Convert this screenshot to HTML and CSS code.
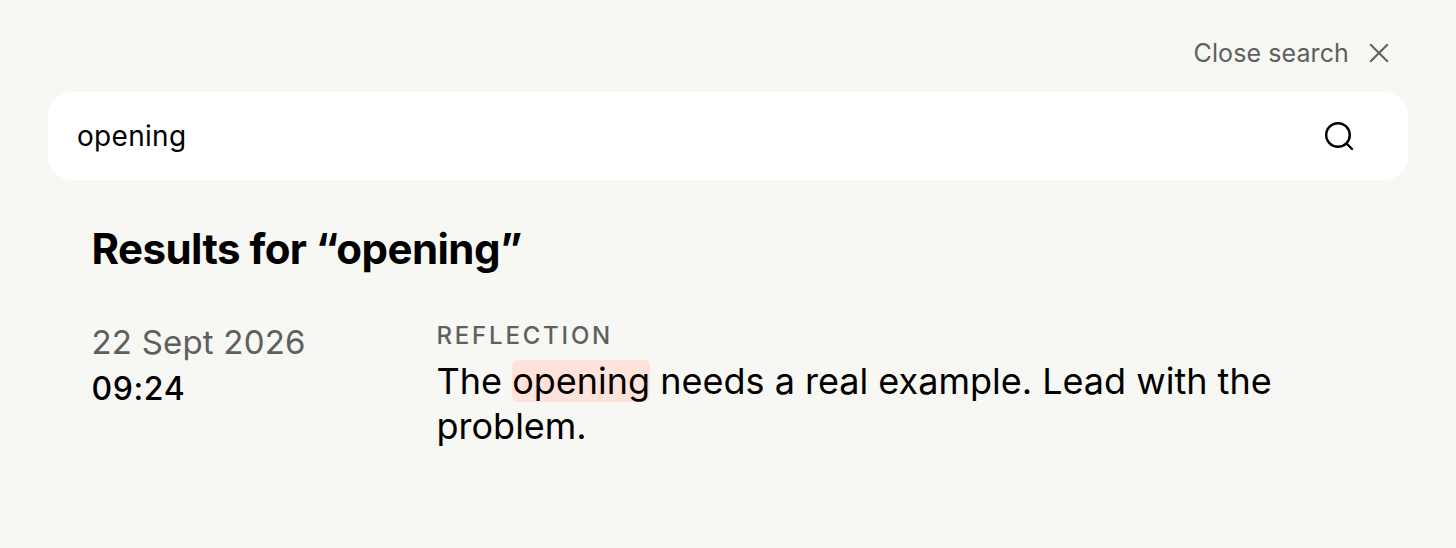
FILE: index.html
```html
<!DOCTYPE html>
<html lang="en">
<head>
    <meta charset="UTF-8">
    <meta name="viewport" content="width=device-width, initial-scale=1.0">
    <title>Search</title>
    <link rel="stylesheet" href="styles.css">
</head>
<body>
    <div class="search-top">
        <button class="close-btn">
            <span>Close search</span>
            <svg width="20" height="20" viewBox="0 0 20 20" fill="none" stroke="#5f5f5f" stroke-width="2"><path d="M1.2 1.2L18.8 18.8M18.8 1.2L1.2 18.8"/></svg>
        </button>
    </div>

    <div class="search-box">
        <div class="search-input">opening</div>
        <svg class="search-icon" width="30" height="30" viewBox="0 0 30 30" fill="none" stroke="#000" stroke-width="2.4" stroke-linecap="round"><circle cx="14" cy="14" r="11.8"/><path d="M23 23L28 28"/></svg>
    </div>

    <div class="results">
        <h1>Results for “opening”</h1>
        <div class="result">
            <div class="result-date">
                <div class="date">22 Sept 2026</div>
                <div class="time">09:24</div>
            </div>
            <div class="result-body">
                <div class="label">REFLECTION</div>
                <p>The <mark>opening</mark> needs a real example. Lead with the problem.</p>
            </div>
        </div>
    </div>
</body>
</html>
```

FILE: styles.css
```css
body {
    margin: 0;
    padding: 0 48px;
    height: 548px;
    box-sizing: border-box;
    overflow: hidden;
    background-color: #f7f7f3;
    font-family: Inter, sans-serif;
    color: #000;
}

.search-top {
    display: flex;
    justify-content: flex-end;
    height: 92px;
    padding-right: 19px;
}

.close-btn {
    display: flex;
    align-items: center;
    gap: 20px;
    height: 106px;
    padding: 0;
    align-self: flex-start;
    background: none;
    border: none;
    font-family: inherit;
    font-size: 25px;
    letter-spacing: 0.1px;
    color: #5f5f5f;
    cursor: pointer;
}

.search-box {
    display: flex;
    align-items: center;
    justify-content: space-between;
    height: 88px;
    padding: 0 54px 0 29px;
    background-color: #fff;
    border-radius: 24px;
}

.search-input {
    font-size: 28px;
    letter-spacing: 0.3px;
}

.results {
    padding: 0 44px 0 43.5px;
}

.results h1 {
    margin: 42px 0 0;
    font-size: 42px;
    line-height: 54px;
    font-weight: 700;
    letter-spacing: -0.55px;
}

.result {
    display: flex;
    margin-top: 37px;
}

.result-date {
    flex: 0 0 345px;
}

.date {
    font-size: 33px;
    line-height: 46px;
    letter-spacing: 0.2px;
    color: #5f5f5f;
    margin-top: 6px;
}

.time {
    font-size: 32px;
    line-height: 44px;
    letter-spacing: 0.6px;
    font-weight: 450;
    margin-top: 2px;
}

.label {
    margin-top: 7px;
    font-size: 24px;
    line-height: 32px;
    font-weight: 550;
    letter-spacing: 2.8px;
    color: #5f5f5f;
}

.result-body p {
    margin: 7px 0 0;
    font-size: 36px;
    line-height: 45px;
}

mark {
    display: inline-block;
    line-height: 42px;
    background-color: #ffe2da;
    color: inherit;
    border-radius: 6px;
}
```
